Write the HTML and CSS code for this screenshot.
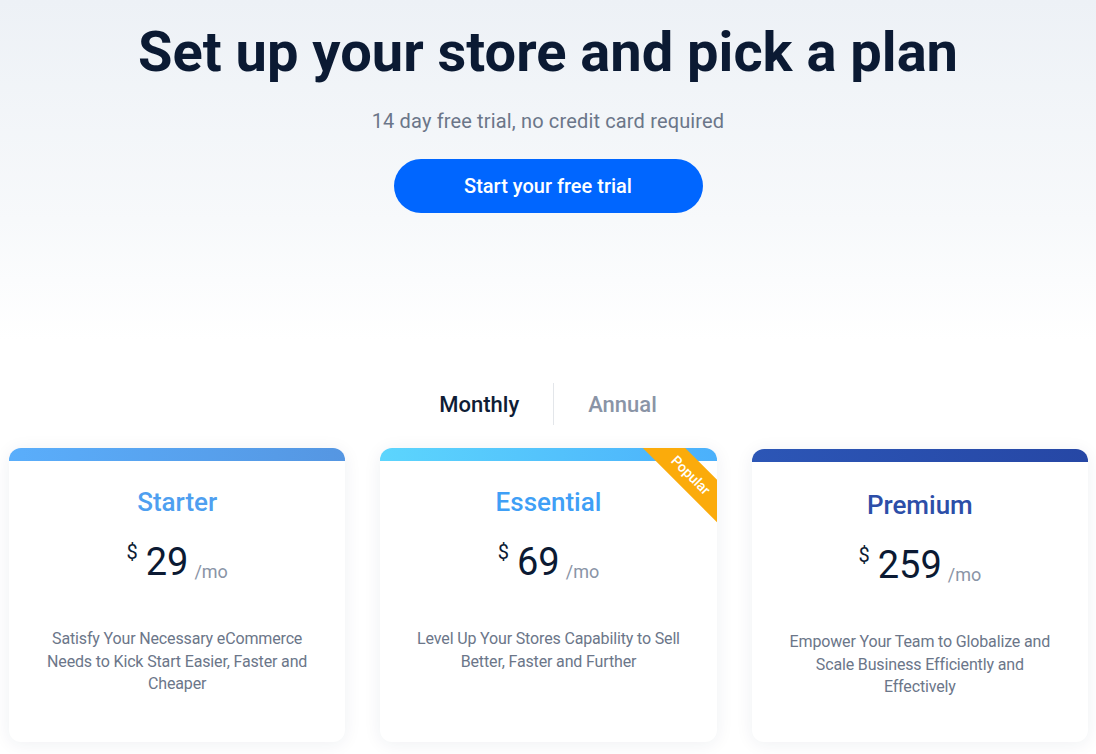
FILE: index.html
```html
<!DOCTYPE html>
<html lang="en">
<head>
<meta charset="utf-8">
<title>Pricing</title>
<link rel="stylesheet" href="styles.css">
</head>
<body>
<main class="page">
  <section class="hero">
    <h1 class="hero-title">Set up your store and pick a plan</h1>
    <p class="hero-sub">14 day free trial, no credit card required</p>
    <a class="cta" href="#">Start your free trial</a>
  </section>

  <div class="toggle">
    <span class="toggle-item is-active">Monthly</span>
    <span class="toggle-item toggle-item--annual">Annual</span>
  </div>

  <section class="plans">
    <article class="plan plan--starter">
      <div class="plan-bar"></div>
      <h2 class="plan-name">Starter</h2>
      <div class="plan-price"><span class="cur">$</span><span class="amt">29</span><span class="per">/mo</span></div>
      <p class="plan-desc">Satisfy Your Necessary eCommerce Needs to Kick Start Easier, Faster and Cheaper</p>
    </article>
    <article class="plan plan--essential">
      <div class="plan-bar"></div>
      <div class="ribbon">Popular</div>
      <h2 class="plan-name">Essential</h2>
      <div class="plan-price"><span class="cur">$</span><span class="amt">69</span><span class="per">/mo</span></div>
      <p class="plan-desc">Level Up Your Stores Capability to Sell Better, Faster and Further</p>
    </article>
    <article class="plan plan--premium">
      <div class="plan-bar"></div>
      <h2 class="plan-name">Premium</h2>
      <div class="plan-price"><span class="cur">$</span><span class="amt">259</span><span class="per">/mo</span></div>
      <p class="plan-desc">Empower Your Team to Globalize and Scale Business Efficiently and Effectively</p>
    </article>
  </section>
</main>
</body>
</html>
```

FILE: styles.css
```css
* { box-sizing: border-box; }

html, body {
  margin: 0;
  padding: 0;
}

body {
  font-family: Roboto, "Noto Sans", Arial, sans-serif;
  background: linear-gradient(180deg, #edf1f6 0px, #f7f9fb 220px, #ffffff 340px, #ffffff 100%);
  min-height: 754px;
  overflow: hidden;
}

.page {
  display: flex;
  flex-direction: column;
  align-items: stretch;
}

.hero {
  display: flex;
  flex-direction: column;
  align-items: center;
  padding-top: 18px;
}

.hero-title {
  margin: 0;
  font-size: 56px;
  line-height: 68px;
  font-weight: 700;
  color: #0b1a33;
  letter-spacing: 0;
}

.hero-sub {
  margin: 23px 0 0;
  font-size: 20px;
  line-height: 24px;
  color: #6b7689;
  letter-spacing: 0.15px;
}

.cta {
  margin-top: 26px;
  width: 309px;
  height: 54px;
  border-radius: 27px;
  background: #0066ff;
  color: #ffffff;
  text-decoration: none;
  font-size: 20px;
  font-weight: 500;
  display: flex;
  align-items: center;
  justify-content: center;
}

.toggle {
  margin-top: 170px;
  display: flex;
  justify-content: center;
  height: 42px;
}

.toggle-item {
  display: flex;
  align-items: center;
  padding: 0 34px;
  font-size: 22px;
  font-weight: 500;
  color: #8a94a6;
}

.toggle-item.is-active {
  color: #0f1d36;
}

.toggle-item--annual {
  border-left: 1px solid #e3e6ea;
}

.plans {
  margin-top: 23px;
  display: grid;
  grid-template-columns: repeat(3, 1fr);
  gap: 35px;
  padding: 0 8px 0 9px;
}

.plan {
  position: relative;
  overflow: hidden;
  background: #ffffff;
  border-radius: 12px;
  box-shadow: 0 2px 18px rgba(30, 45, 80, 0.07);
  display: flex;
  flex-direction: column;
  align-items: center;
  text-align: center;
  height: 294px;
}

.plan-bar {
  align-self: stretch;
  height: 13px;
  flex: none;
}

.plan--starter .plan-bar { background: linear-gradient(90deg, #5aaefb, #5596e2); }
.plan--essential .plan-bar { background: linear-gradient(90deg, #5cd5fd, #4bb0fb); }
.plan--premium .plan-bar { background: linear-gradient(90deg, #2c56b6, #2647a5); }

.plan--premium {
  margin-top: 1px;
  height: 293px;
}

.plan-name {
  margin: 25px 0 0;
  font-size: 26px;
  line-height: 32px;
  font-weight: 500;
}

.plan--premium .plan-name { margin-top: 27px; }

.plan--starter .plan-name { color: #4f9ff0; }
.plan--essential .plan-name { color: #3f9ff6; }
.plan--premium .plan-name { color: #2c4ea8; }

.plan-price {
  margin-top: 22px;
  line-height: 44px;
  color: #0b1a33;
  white-space: nowrap;
}

.cur {
  font-size: 20px;
  line-height: 25px;
  vertical-align: top;
  margin-right: 8px;
}

.amt {
  font-size: 38px;
}

.per {
  font-size: 18px;
  color: #8a94a6;
  margin-left: 6px;
  vertical-align: -3px;
}

.plan-desc {
  margin: 34px 0 0;
  max-width: 275px;
  font-size: 16px;
  line-height: 22.5px;
  color: #6b7689;
  letter-spacing: -0.15px;
}

.ribbon {
  position: absolute;
  top: 11.5px;
  right: -34px;
  width: 120px;
  height: 30px;
  background: #fbab0b;
  color: #ffffff;
  font-size: 14px;
  font-weight: 500;
  display: flex;
  align-items: center;
  justify-content: center;
  transform: rotate(45deg);
}
```
